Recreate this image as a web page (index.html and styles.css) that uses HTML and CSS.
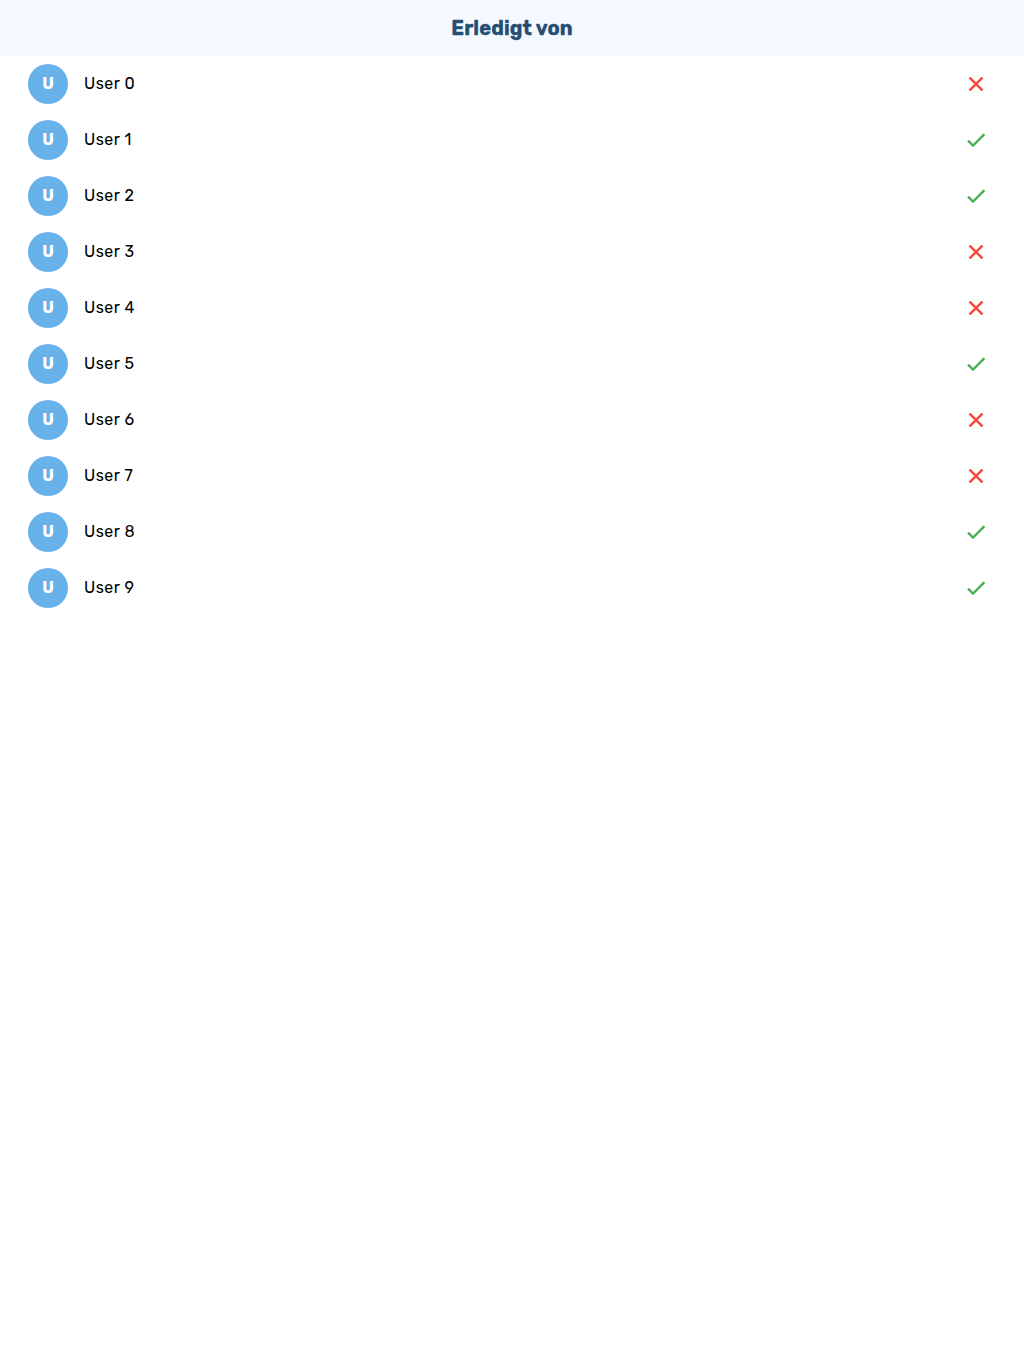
FILE: index.html
```html
<!DOCTYPE html>
<html lang="de">
<head>
<meta charset="utf-8">
<title>Erledigt von</title>
<link rel="stylesheet" href="styles.css">
</head>
<body>
<svg width="0" height="0" class="defs">
<symbol id="close" viewBox="0 0 24 24"><path d="M19 6.41 17.59 5 12 10.59 6.41 5 5 6.41 10.59 12 5 17.59 6.41 19 12 13.41 17.59 19 19 17.59 13.41 12z"/></symbol>
<symbol id="check" viewBox="0 0 24 24"><path d="M9 16.17 4.83 12l-1.42 1.41L9 19 21 7l-1.41-1.41z"/></symbol>
</svg>
<header class="bar"><h1 class="title">Erledigt von</h1></header>
<ul class="list">
<li class="row"><span class="avatar">U</span><span class="name">User 0</span><svg class="icon no"><use href="#close"/></svg></li>
<li class="row"><span class="avatar">U</span><span class="name">User 1</span><svg class="icon yes"><use href="#check"/></svg></li>
<li class="row"><span class="avatar">U</span><span class="name">User 2</span><svg class="icon yes"><use href="#check"/></svg></li>
<li class="row"><span class="avatar">U</span><span class="name">User 3</span><svg class="icon no"><use href="#close"/></svg></li>
<li class="row"><span class="avatar">U</span><span class="name">User 4</span><svg class="icon no"><use href="#close"/></svg></li>
<li class="row"><span class="avatar">U</span><span class="name">User 5</span><svg class="icon yes"><use href="#check"/></svg></li>
<li class="row"><span class="avatar">U</span><span class="name">User 6</span><svg class="icon no"><use href="#close"/></svg></li>
<li class="row"><span class="avatar">U</span><span class="name">User 7</span><svg class="icon no"><use href="#close"/></svg></li>
<li class="row"><span class="avatar">U</span><span class="name">User 8</span><svg class="icon yes"><use href="#check"/></svg></li>
<li class="row"><span class="avatar">U</span><span class="name">User 9</span><svg class="icon yes"><use href="#check"/></svg></li>
</ul>
</body>
</html>
```
FILE: styles.css
```css
body { margin: 0; background: #fff; font-family: Rubik, Roboto, sans-serif; color: #000; }
.defs { display: block; }
.bar { height: 56px; display: flex; align-items: center; justify-content: center; background: #f4f9ff; }
.title { margin: 0; font-size: 20px; font-weight: 700; line-height: 24px; color: #264e73; letter-spacing: 0.1px; -webkit-text-stroke: 0.3px #264e73; }
.list { margin: 0; padding: 0; list-style: none; }
.row { height: 56px; box-sizing: border-box; padding: 0 36px 0 28px; display: flex; align-items: center; gap: 16px; }
.avatar { width: 40px; height: 40px; box-sizing: border-box; padding-bottom: 2px; border-radius: 50%; background: #68b2ea; color: #fff; display: flex; align-items: center; justify-content: center; font-size: 16px; font-weight: 700; }
.name { flex: 1; padding-bottom: 2px; font-size: 16px; letter-spacing: 0.5px; }
.icon { width: 24px; height: 24px; stroke-width: 0.5px; }
.no { fill: #f44336; stroke: #f44336; }
.yes { fill: #4caf50; stroke: #4caf50; }
```
